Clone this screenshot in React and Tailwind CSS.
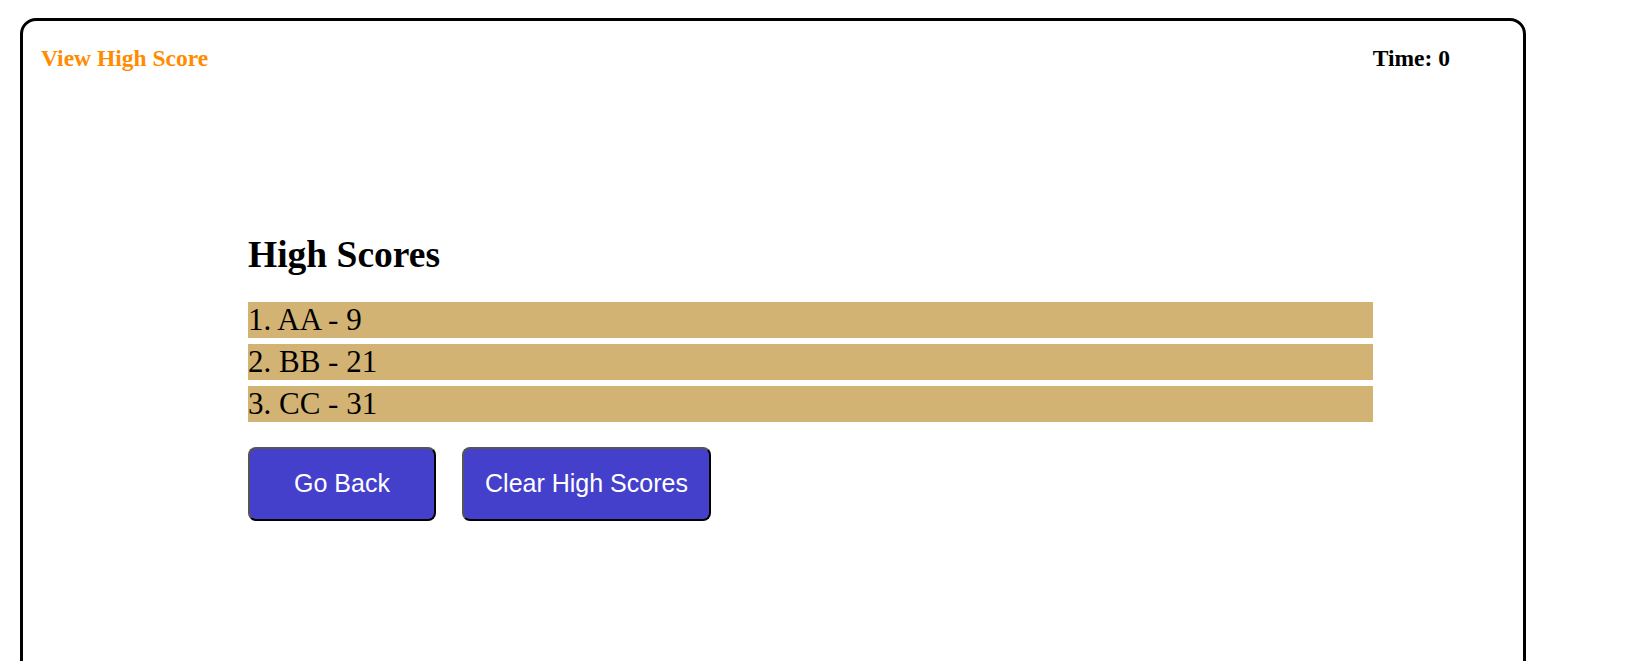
import React from "react";

export default function App() {
  const scores = ["1. AA - 9", "2. BB - 21", "3. CC - 31"];
  return (
    <div className="bg-white w-full min-h-[661px] overflow-hidden pt-[18px] pl-[20px]">
      <div className="w-[1506px] h-[760px] border-[3px] border-black rounded-[16px] bg-white">
        <div
          className="flex justify-between pt-[24px] pl-[18px] pr-[73px] text-[23.5px] leading-[26px] font-bold"
          style={{ fontFamily: '"Liberation Serif", "Times New Roman", serif' }}
        >
          <span className="text-[#ff8c00]">View High Score</span>
          <span className="text-black">Time: 0</span>
        </div>
        <div
          className="ml-[15%] w-[75%] mt-[162px]"
          style={{ fontFamily: '"Liberation Serif", "Times New Roman", serif' }}
        >
          <h2 className="text-[37.5px] leading-[44px] font-bold text-black">High Scores</h2>
          <ul className="mt-[25px] flex flex-col gap-[6px]">
            {scores.map((s) => (
              <li key={s} className="bg-[#d3b374] h-[36px] text-[31px] leading-[36px] text-black">
                {s}
              </li>
            ))}
          </ul>
          <div
            className="mt-[25px] flex gap-[26px]"
            style={{ fontFamily: '"Liberation Sans", Arial, sans-serif' }}
          >
            <button className="w-[188px] h-[74px] flex items-center justify-center bg-[#4440cc] text-white text-[25px] rounded-[8px] border-2 border-t-[#555] border-l-[#555] border-b-black border-r-black">
              Go Back
            </button>
            <button className="w-[249px] h-[74px] flex items-center justify-center bg-[#4440cc] text-white text-[25px] rounded-[8px] border-2 border-t-[#555] border-l-[#555] border-b-black border-r-black">
              Clear High Scores
            </button>
          </div>
        </div>
      </div>
    </div>
  );
}
